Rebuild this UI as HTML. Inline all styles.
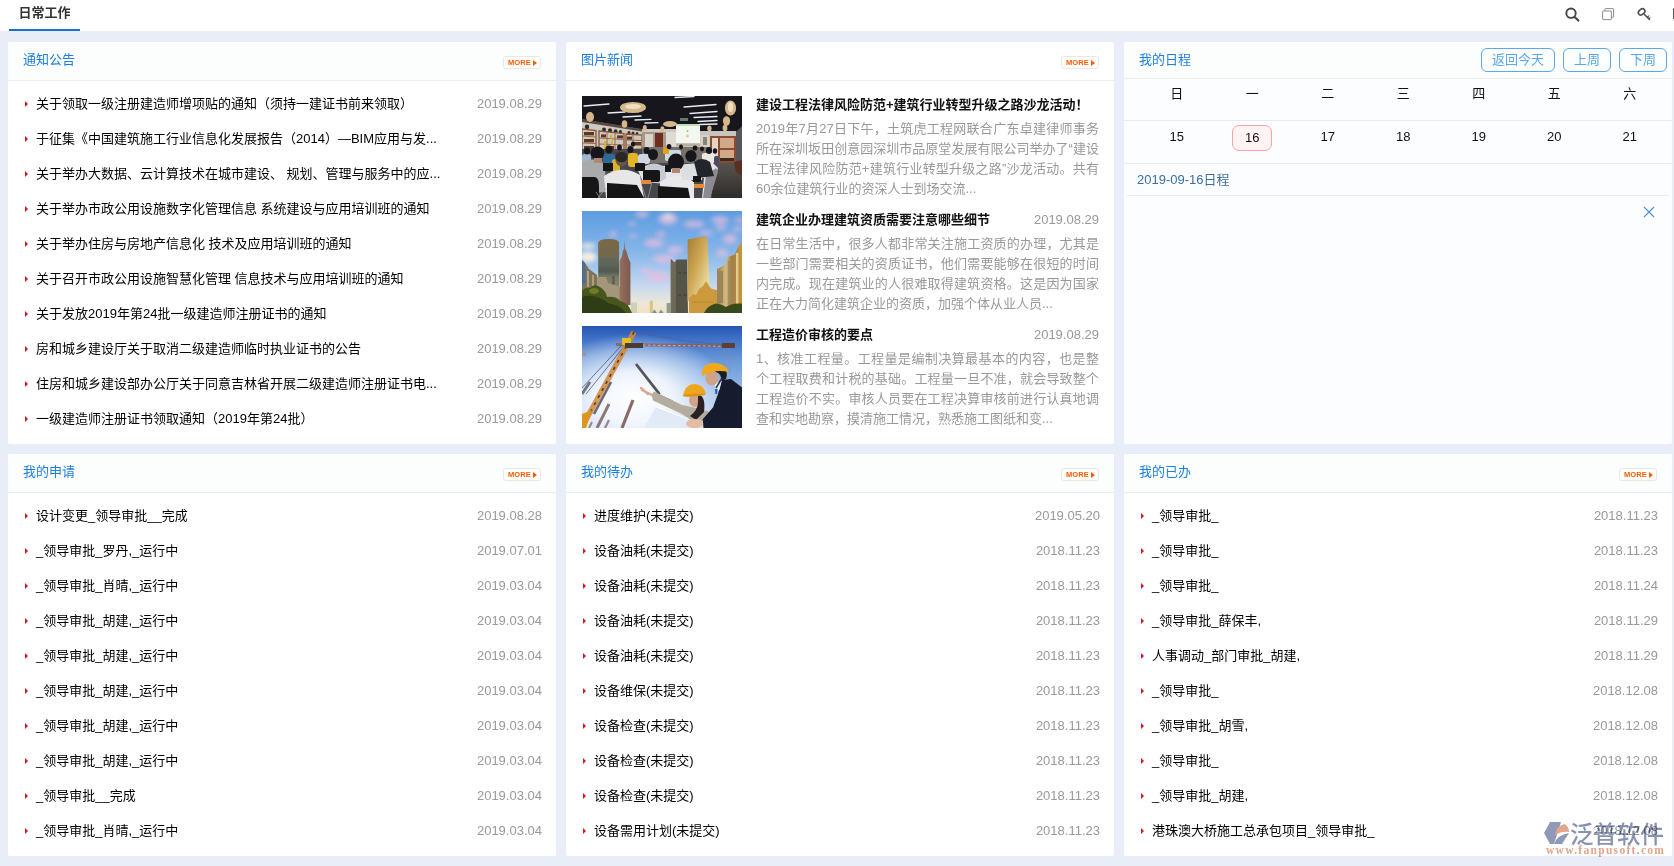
<!DOCTYPE html>
<html lang="zh-CN">
<head>
<meta charset="utf-8">
<title>日常工作</title>
<style>
*{box-sizing:border-box;margin:0;padding:0}
html,body{width:1674px;height:866px;overflow:hidden}
body{position:relative;background:#e9edf8;font-family:"Liberation Sans","Noto Sans CJK SC",sans-serif;font-size:13px;color:#222;}
#top{position:absolute;left:0;top:0;width:1674px;height:31px;background:#fff}
#tab{position:absolute;left:9px;top:0;width:71px;height:31px;text-align:center;line-height:26px;font-weight:bold;color:#333;font-size:13px}
.ico{position:absolute;top:0}
.panel{position:absolute;width:548px;background:#fff;border-radius:2px;overflow:hidden}
.r1{top:42px;height:402px}
.r2{top:454px;height:402px}
.c1{left:8px}.c2{left:566px}.c3{left:1124px}
#p3{background:#fcfdfe}
.hd{position:relative;height:39px;border-bottom:1px solid #ebecee;background:#fcfdfd}
.hd .t{position:absolute;left:15px;top:0;line-height:36px;color:#1e7fe0;font-size:13px}
.more{position:absolute;right:15px;top:14px;width:38px;height:13px;border:1px solid #ece6e0;border-radius:3px;background:#fff;font-size:7.5px;line-height:11px;color:#ff5a00;font-weight:bold;text-align:left;padding-left:4px;letter-spacing:0.1px;font-family:"Liberation Sans",sans-serif}
.more i{position:absolute;right:3px;top:2.5px;border-left:4px solid #ff5a00;border-top:3.5px solid transparent;border-bottom:3.5px solid transparent;width:0;height:0}
ul{list-style:none;padding-top:5px}
li{position:relative;height:35px;line-height:35px;padding-left:28px;white-space:nowrap;color:#000}
li:before{content:"";position:absolute;left:16.5px;top:15px;border-left:3.5px solid #d9141c;border-top:3px solid transparent;border-bottom:3px solid transparent}
li b{position:absolute;right:14px;top:0;font-weight:normal;color:#999}

.news{position:absolute;left:16px;width:517px;height:102px}
.news .im{position:absolute;left:0;top:0;width:160px;height:102px;overflow:hidden}
.news .im svg{display:block}
.news h4{position:absolute;left:174px;top:0;font-size:13px;line-height:18px;font-weight:bold;color:#111;white-space:nowrap}
.news .d{position:absolute;right:0;top:0;line-height:18px;color:#999}
.news p{position:absolute;left:174px;top:23px;width:343px;line-height:20px;color:#999;white-space:nowrap}
.news p span{display:block;text-align:justify;text-align-last:justify}
.news p span.l{text-align-last:left}
.btn{position:absolute;top:6px;height:24px;border:1px solid #5aa7ea;border-radius:6px;color:#5aa7ea;text-align:center;line-height:21px;font-size:13px;background:#fdfeff}
.wk{position:absolute;left:15px;width:529px;display:flex}
.wk span{width:75.5px;text-align:center;color:#111}
.ln{position:absolute;height:1px;background:#e8ebee}
#today{display:inline-block;position:relative;left:0;font-style:normal;width:40px;height:26px;line-height:24px;border:1px solid #f7a3a3;border-radius:7px;background:#fff3f3;margin-top:4px;vertical-align:top}
#wm{position:absolute;left:1544px;top:822px;width:122px;height:34px;mix-blend-mode:multiply}
#wm .cn{position:absolute;left:26px;top:-6px;font-size:23.5px;line-height:34px;color:#8793b0;white-space:nowrap;font-family:"Noto Sans CJK SC",sans-serif;font-weight:500;letter-spacing:0}
#wm .url{position:absolute;left:2px;top:21px;font-family:"Liberation Serif",serif;font-weight:bold;font-size:11.5px;line-height:14px;color:#e3a58b;letter-spacing:1.3px;white-space:nowrap}
#tab:after{content:"";position:absolute;left:0;right:0;top:29.4px;height:1.7px;background:#1a73c9}
</style>
</head>
<body>
<div id="top"><div id="tab">日常工作</div><svg class="ico" style="left:1560px" width="114" height="31" viewBox="1560 0 114 31">
<circle cx="1571" cy="13.2" r="4.7" fill="none" stroke="#444" stroke-width="1.9"/><path d="M1574.6 16.9L1578.4 20.6" stroke="#444" stroke-width="2.1" stroke-linecap="round"/>
<rect x="1605" y="8.6" width="8.6" height="8.6" rx="0.6" fill="#fff" stroke="#8c8c8c" stroke-width="1"/><rect x="1602.6" y="11" width="8.8" height="8.6" rx="0.6" fill="#fff" stroke="#8c8c8c" stroke-width="1"/>
<ellipse cx="1641.6" cy="11.9" rx="3.6" ry="2.6" transform="rotate(-38 1641.6 11.9)" fill="none" stroke="#505050" stroke-width="1.6"/><path d="M1644.2 14.2L1649.4 19.4" stroke="#505050" stroke-width="1.5" stroke-linecap="round"/><path d="M1647.2 17.2L1649.2 15.6M1648.8 18.8L1650.4 17.4" stroke="#505050" stroke-width="1.1"/>
<rect x="1673" y="8.5" width="1" height="10.5" fill="#555"/>
</svg></div>

<div class="panel r1 c1" id="p1">
<div class="hd"><span class="t">通知公告</span><span class="more">MORE<i></i></span></div>
<ul>
<li>关于领取一级注册建造师增项贴的通知（须持一建证书前来领取）<b>2019.08.29</b></li>
<li>于征集《中国建筑施工行业信息化发展报告（2014）—BIM应用与发...<b>2019.08.29</b></li>
<li>关于举办大数据、云计算技术在城市建设、 规划、管理与服务中的应...<b>2019.08.29</b></li>
<li>关于举办市政公用设施数字化管理信息 系统建设与应用培训班的通知<b>2019.08.29</b></li>
<li>关于举办住房与房地产信息化 技术及应用培训班的通知<b>2019.08.29</b></li>
<li>关于召开市政公用设施智慧化管理 信息技术与应用培训班的通知<b>2019.08.29</b></li>
<li>关于发放2019年第24批一级建造师注册证书的通知<b>2019.08.29</b></li>
<li>房和城乡建设厅关于取消二级建造师临时执业证书的公告<b>2019.08.29</b></li>
<li>住房和城乡建设部办公厅关于同意吉林省开展二级建造师注册证书电...<b>2019.08.29</b></li>
<li>一级建造师注册证书领取通知（2019年第24批）<b>2019.08.29</b></li>
</ul>
</div>

<div class="panel r1 c2" id="p2">
<div class="hd" style="background:#fff"><span class="t">图片新闻</span><span class="more">MORE<i></i></span></div>

<div class="news" style="top:54px">
<div class="im" id="im1"><svg width="160" height="102" viewBox="0 0 160 102"><defs><filter id="b1" x="-5%" y="-5%" width="110%" height="110%"><feGaussianBlur stdDeviation="0.55"/></filter>
<linearGradient id="fl1" x1="0" y1="0" x2="0" y2="1"><stop offset="0" stop-color="#5a5450"/><stop offset="1" stop-color="#2e2b2a"/></linearGradient></defs>
<rect width="160" height="102" fill="#14171d"/>
<g filter="url(#b1)">
<polygon points="0,23 60,33 94,33 94,28 118,28 118,35 155,35 160,30 160,70 0,70" fill="#cfc8c0"/>
<polygon points="0,23 60,33 60,35.4 0,26" fill="#5a4a40"/><g fill="#2c2a2a"><ellipse cx="5" cy="31" rx="2.2" ry="2.4"/><ellipse cx="22" cy="33.6" rx="2" ry="2.2"/><ellipse cx="28" cy="34.4" rx="2" ry="2.2"/><ellipse cx="33.6" cy="35.2" rx="1.8" ry="2"/><ellipse cx="38.4" cy="35.8" rx="1.6" ry="1.8"/><ellipse cx="47" cy="36.8" rx="1.5" ry="1.7"/><ellipse cx="51" cy="37.2" rx="1.4" ry="1.6"/><ellipse cx="55" cy="37.6" rx="1.3" ry="1.5"/></g>
<g fill="none" stroke="#8a5636" stroke-width="1.3"><polygon points="0,33 14,34.5 14,54 0,56"/><polygon points="17,35 42,37.5 42,54 17,55"/><polygon points="44,38 60,39 60,53 44,54"/></g>
<g stroke="#9a6a48" stroke-width="1"><path d="M0 40L14 41M0 47L14 47.5M17 42L42 43.5M17 48L42 49M44 44L60 44.5M44 49L60 49.5M25 36L25 55M33 36.5L33 55M51 38.5L51 54"/></g>
<g fill="#5a3826"><rect x="2" y="36" width="10" height="3.4"/><rect x="2" y="43" width="10" height="3.4"/><rect x="2" y="50" width="10" height="3.6"/><rect x="19" y="38.4" width="5" height="3"/><rect x="35" y="39.4" width="6" height="3"/><rect x="26" y="50" width="6" height="3.4"/><rect x="45" y="40.6" width="5" height="3"/><rect x="52" y="46" width="7" height="3"/></g>
<g fill="#d8b42a"><rect x="22" y="45" width="2" height="8"/><rect x="29" y="44.6" width="2" height="4"/><rect x="28" y="38.6" width="2" height="4"/></g>
<rect x="60" y="36" width="34" height="18" fill="#a89888"/><rect x="63" y="38" width="8" height="14" fill="#d8d4cc"/><rect x="73" y="37" width="8" height="17" fill="#6e2f22"/>
<rect x="84" y="36" width="10" height="18" fill="#dedbd4"/>
<rect x="94" y="29" width="24" height="18.4" fill="#f2f7ef"/><rect x="94" y="28" width="24" height="2" fill="#bfe0b0"/><circle cx="105.5" cy="40" r="1.4" fill="#e8c49a"/><circle cx="105.5" cy="35" r="0.9" fill="#8ac078"/>
<rect x="94" y="47.4" width="24" height="3" fill="#b8aea2"/>
<rect x="118" y="35" width="38" height="6" fill="#c8c4c0"/>
<rect x="119" y="39" width="8" height="12" fill="#d8d2c4"/><rect x="121" y="41" width="4" height="8" fill="#8a8478"/>
<rect x="128" y="40" width="26" height="27" fill="#8a4e32"/><rect x="130" y="42" width="6" height="22" fill="#e4d4c0"/><rect x="138" y="42" width="14" height="22" fill="#d0aa88"/><rect x="138" y="52" width="14" height="2" fill="#8a4e32"/><rect x="138" y="62" width="14" height="3" fill="#3a2a24"/>
<rect x="154" y="28" width="6" height="46" fill="#57575a"/>
<polygon points="0,0 160,0 160,30 155,35 118,35 118,28 94,28 94,33 60,33 0,23" fill="#14171d"/>
<g stroke="#e8ecf2" stroke-width="1.3" stroke-linecap="round"><path d="M2 10L27 8"/><path d="M26 17L43 16"/><path d="M41 21L59 20"/><path d="M53 24L69 23.4"/><path d="M63 27L76 26.6"/><path d="M93 1.5L112 0.5"/><path d="M102 11L134 8.5"/><path d="M108 17.5L135 15.5"/><path d="M112 21.5L135 20.5"/><path d="M116 25.5L135 24.5"/><path d="M118 28.5L135 28"/></g>
<g fill="#d6b78c"><ellipse cx="51" cy="11.5" rx="13" ry="5.6"/><ellipse cx="8" cy="21" rx="4" ry="5"/><ellipse cx="42.5" cy="28" rx="2.8" ry="3.8"/><ellipse cx="88" cy="28" rx="7" ry="3"/><ellipse cx="148.5" cy="12" rx="5.6" ry="7.4"/><ellipse cx="144.5" cy="25" rx="3.6" ry="4.8"/><ellipse cx="143" cy="32" rx="2.4" ry="3.2"/><ellipse cx="62.8" cy="32" rx="2" ry="3"/><ellipse cx="80.4" cy="33" rx="2" ry="2.8"/><ellipse cx="127.4" cy="32.6" rx="2.2" ry="3"/></g>
<g fill="#efe0c4"><ellipse cx="51" cy="10.5" rx="8" ry="2.6"/><ellipse cx="148.5" cy="11" rx="2.6" ry="5"/></g>
<rect x="98" y="22" width="8" height="3" fill="#6a7a6a"/>
<polygon points="128,67 160,66 160,102 122,102" fill="url(#fl1)"/>
<polygon points="152,66 160,64 160,80 154,76" fill="#5a2e20"/>
<rect x="0" y="53" width="130" height="49" fill="#45464c"/>
<rect x="60" y="51" width="70" height="16" fill="#77716a"/>
<rect x="83" y="54" width="16" height="11" rx="2" fill="#cfd9e6"/>
<rect x="120" y="57" width="13" height="10" rx="2" fill="#ece8e2"/><rect x="132" y="60" width="5" height="9" rx="2" fill="#4a4a6a"/>
<polygon points="55,72 130,66 136,72 128,102 120,102 122,82 60,84" fill="#e4e4ea"/>
<polygon points="124,80 134,72 136,76 128,102 121,102" fill="#8a8a90"/>
<rect x="21" y="58" width="12" height="10" rx="2" fill="#2f6a98"/>
<rect x="46" y="57" width="10" height="14" rx="3" fill="#e3b42c"/><rect x="30" y="63" width="8" height="14" rx="3" fill="#d9b12e"/>
<rect x="81" y="51" width="6" height="7" rx="1" fill="#e0a020"/>
<rect x="0" y="58" width="9" height="12" rx="2" fill="#9fb7d2"/>
<rect x="56" y="58" width="12" height="10" rx="3" fill="#cfd6e2"/>
<rect x="33" y="56" width="6" height="8" rx="2" fill="#5a3048"/>
<path d="M0 66Q12 60 23 68L24 96L0 98Z" fill="#a9aaac"/>
<path d="M22 80Q40 68 58 79L62 102L24 102Z" fill="#e9e6ea"/>
<path d="M60 72Q72 63 84 72L84 88L62 86Z" fill="#c6cbd3"/>
<path d="M78 86Q95 74 112 86L112 102L78 102Z" fill="#ebe8ea"/>
<path d="M99 72Q110 64 121 72L120 84L100 84Z" fill="#dcdfe2"/>
<path d="M112 66Q120 60 128 66L132 80L116 82Z" fill="#24262c"/>
<g fill="#17171a"><ellipse cx="15.5" cy="57" rx="6.8" ry="6.6"/><ellipse cx="71" cy="58.5" rx="5" ry="5.5"/><ellipse cx="94" cy="66" rx="8" ry="8.5"/><ellipse cx="109" cy="60" rx="5.6" ry="6"/><ellipse cx="27" cy="53.5" rx="3.6" ry="4"/><ellipse cx="48.4" cy="53.5" rx="3" ry="3.4"/><ellipse cx="64.6" cy="54.5" rx="3" ry="3.6"/><ellipse cx="127" cy="54.5" rx="3" ry="3.4"/><ellipse cx="37.5" cy="51.5" rx="2.4" ry="3"/><ellipse cx="51" cy="48" rx="2.2" ry="2.6"/><ellipse cx="87" cy="50.5" rx="2.4" ry="2.6"/><ellipse cx="5" cy="55" rx="3" ry="3.4"/><ellipse cx="99" cy="51" rx="2" ry="2.4"/><ellipse cx="113" cy="52" rx="2.4" ry="2.6"/><ellipse cx="120" cy="53" rx="2" ry="2.4"/><ellipse cx="133" cy="55" rx="2.2" ry="2.8"/></g>
<rect x="12" y="62" width="8" height="5" fill="#b08870"/><rect x="90" y="72" width="8" height="5" fill="#b08870"/>
<ellipse cx="39.5" cy="63" rx="6.2" ry="7.5" fill="#6a5448"/><ellipse cx="39.5" cy="61" rx="6" ry="5.2" fill="#2a2624"/>
<g fill="#121317"><path d="M0 81L13 81Q17 82 17 90L17 102L0 102Z"/><path d="M25 87L55 89L62 102L25 102Z"/><rect x="61" y="74" width="17" height="12" rx="2"/><path d="M76 90L106 92L108 102L76 102Z"/><rect x="53" y="67" width="10" height="8" rx="1"/><rect x="21" y="67" width="10" height="8"/><rect x="111" y="80" width="8" height="6"/><rect x="83" y="69" width="6" height="7"/></g>
<g stroke="#9a9aa0" stroke-width="0.8" fill="none"><path d="M14 96L18 102M24 92L16 102M60 90L64 102M70 86L66 102"/></g>
<rect x="59" y="84" width="10" height="4" fill="#e58a3a"/><rect x="112" y="88" width="10" height="4" fill="#e58a3a"/>
</g></svg></div>
<h4>建设工程法律风险防范+建筑行业转型升级之路沙龙活动！</h4>
<p><span>2019年7月27日下午，土筑虎工程网联合广东卓建律师事务</span><span>所在深圳坂田创意园深圳市品原堂发展有限公司举办了“建设</span><span>工程法律风险防范+建筑行业转型升级之路”沙龙活动。共有</span><span class="l">60余位建筑行业的资深人士到场交流...</span></p>
</div>
<div class="news" style="top:169px">
<div class="im" id="im2"><svg width="160" height="102" viewBox="0 0 160 102"><defs><filter id="b2" x="-5%" y="-5%" width="110%" height="110%"><feGaussianBlur stdDeviation="0.6"/></filter><filter id="b2c" x="-40%" y="-40%" width="180%" height="180%"><feGaussianBlur stdDeviation="2.6"/></filter>
<linearGradient id="sk2" x1="0" y1="0" x2="0" y2="1"><stop offset="0" stop-color="#5c9ce0"/><stop offset="0.4" stop-color="#86b6ea"/><stop offset="0.72" stop-color="#c2d8f0"/><stop offset="0.9" stop-color="#ece6da"/><stop offset="1" stop-color="#f2e2c0"/></linearGradient>
<linearGradient id="gd" x1="0" y1="0" x2="1" y2="1"><stop offset="0" stop-color="#a47c34"/><stop offset="0.45" stop-color="#cfa956"/><stop offset="0.8" stop-color="#e8d8a0"/><stop offset="1" stop-color="#d4c080"/></linearGradient>
<linearGradient id="ba" x1="0" y1="0" x2="0" y2="1"><stop offset="0" stop-color="#7c6844"/><stop offset="0.35" stop-color="#6e6850"/><stop offset="0.5" stop-color="#4e5a52"/><stop offset="0.6" stop-color="#7c7a62"/><stop offset="1" stop-color="#948e74"/></linearGradient>
<linearGradient id="bb" x1="0" y1="0" x2="1" y2="0"><stop offset="0" stop-color="#98705c"/><stop offset="1" stop-color="#7a5a50"/></linearGradient>
<linearGradient id="bf" x1="0" y1="0" x2="1" y2="0"><stop offset="0" stop-color="#9a7e4a"/><stop offset="0.35" stop-color="#d2bc80"/><stop offset="0.6" stop-color="#a07e46"/><stop offset="1" stop-color="#c8963e"/></linearGradient></defs>
<rect width="160" height="102" fill="url(#sk2)"/>
<g filter="url(#b2c)" fill="#eabfe0" opacity="0.7"><ellipse cx="86" cy="8" rx="10" ry="6"/><ellipse cx="60" cy="3" rx="7" ry="3.4"/><ellipse cx="72" cy="32" rx="10" ry="4.4"/><ellipse cx="79" cy="23" rx="5" ry="2.6"/><ellipse cx="112" cy="13" rx="11" ry="3.6"/><ellipse cx="138" cy="9" rx="9" ry="4"/><ellipse cx="139" cy="16.5" rx="6" ry="2.4"/><ellipse cx="148" cy="28" rx="7" ry="5"/><ellipse cx="157" cy="9" rx="5" ry="2.4"/><ellipse cx="156" cy="18" rx="5" ry="2.4"/><ellipse cx="82" cy="48" rx="11" ry="4.6"/><ellipse cx="76" cy="66" rx="11" ry="6"/><ellipse cx="93" cy="39" rx="8" ry="4"/><ellipse cx="31" cy="23" rx="4" ry="2.6"/><ellipse cx="51" cy="25" rx="3.4" ry="2.2"/><ellipse cx="50" cy="13" rx="4" ry="2"/><ellipse cx="140" cy="42" rx="6" ry="4"/><ellipse cx="64" cy="60" rx="6" ry="3"/><ellipse cx="124" cy="22" rx="7" ry="2.6"/></g>
<g filter="url(#b2c)" fill="#f6f0e2"><ellipse cx="6" cy="35" rx="8" ry="2.6"/><ellipse cx="6" cy="46" rx="9" ry="5.4"/><ellipse cx="86" cy="6" rx="5" ry="3" opacity="0.6"/></g>
<g filter="url(#b2)">
<path d="M16.2 32Q16.6 28.2 26.6 28Q36.8 28.2 37.1 32L37.1 92L16.2 92Z" fill="url(#ba)"/><rect x="17" y="47" width="19" height="8" fill="#5a665e" opacity="0.8"/><rect x="30" y="65" width="2.6" height="9" fill="#5a5e58"/>
<polygon points="0,49 3,52 7,58 15,64 15,84 0,84" fill="#7a7460"/><polygon points="0,49 3,52 4,72 0,74" fill="#4e6e90"/><rect x="5" y="60" width="2" height="16" fill="#c0a070"/><rect x="10" y="64" width="2" height="14" fill="#b89c70"/>
<polygon points="15,66 24,66 26,72 36,75 40,78 40,96 15,96" fill="#a4967a"/>
<polygon points="42.4,29 43,37.6 45,41.6 46,46 48.4,51.6 48.4,94 37.6,94 37.6,50 40,45 40.6,41 42,37.6" fill="url(#bb)"/>
<rect x="49" y="91.4" width="6" height="10.6" fill="#ccd2ba"/><rect x="67.8" y="89.6" width="3" height="12.4" fill="#d8c484"/><rect x="84.6" y="92" width="4" height="10" fill="#8f9e92"/><polygon points="70,102 72.4,98.6 75,102" fill="#7f938e"/><polygon points="76.6,102 79,98.6 81.6,102" fill="#7f938e"/>
<polygon points="88.8,47.8 92.6,52 94.6,48.6 105,48.6 106,102 88.8,102" fill="#575348"/><rect x="88.8" y="51" width="5" height="51" fill="#6e6a56"/><rect x="96" y="61" width="9" height="1.6" fill="#4a463c"/><rect x="96" y="83.4" width="9" height="1.6" fill="#4a463c"/><rect x="99" y="52" width="2" height="50" fill="#565246"/>
<polygon points="105.6,28.4 124,25 125.4,29 127.6,72 124,90 105.6,90" fill="url(#gd)"/>
<path d="M107 102L107 87L111 83L114 84L117 78L121 75L124 70L127 75L130 78L135 79L135 102Z" fill="#cc9a3c"/><rect x="110" y="90" width="22" height="2" fill="#c09238"/>
<polygon points="135,58 142,54.6 146,46 153,43.6 155,38 158.6,33 160,30 160,96 135,96" fill="url(#bf)"/><rect x="135" y="60" width="6" height="32" fill="#9a8458"/><rect x="146" y="50" width="5" height="44" fill="#9c8458" opacity="0.7"/><rect x="154" y="42" width="2.4" height="52" fill="#e6cc8c"/>
<path d="M0 80Q3 76 8 77Q12 72 18 76Q24 80 25 86Q34 85 38 90Q46 91 50 102L0 102Z" fill="#46561a"/><path d="M0 86Q12 82 26 92Q38 94 44 102L0 102Z" fill="#2e3c14"/><ellipse cx="12" cy="80" rx="5" ry="3" fill="#6e7c26"/>
<path d="M122 102Q126 94 134 92.4Q140 93 144 96Q150 91.6 160 92.6L160 102Z" fill="#38481a"/>
</g></svg></div>
<h4>建筑企业办理建筑资质需要注意哪些细节</h4><span class="d">2019.08.29</span>
<p><span>在日常生活中，很多人都非常关注施工资质的办理，尤其是</span><span>一些部门需要相关的资质证书，他们需要能够在很短的时间</span><span>内完成。现在建筑业的人很难取得建筑资格。这是因为国家</span><span class="l">正在大力简化建筑企业的资质，加强个体从业人员...</span></p>
</div>
<div class="news" style="top:284px">
<div class="im" id="im3"><svg width="160" height="102" viewBox="0 0 160 102"><defs><filter id="b3" x="-5%" y="-5%" width="110%" height="110%"><feGaussianBlur stdDeviation="0.7"/></filter>
<linearGradient id="sk3" x1="0" y1="0" x2="0" y2="1"><stop offset="0" stop-color="#2555b2"/><stop offset="0.12" stop-color="#3e70c6"/><stop offset="0.35" stop-color="#6a9ada"/><stop offset="0.7" stop-color="#a4c2ea"/><stop offset="1" stop-color="#cddcf2"/></linearGradient>
<radialGradient id="gl3" cx="0.32" cy="0.70" r="0.62"><stop offset="0" stop-color="#ffffff" stop-opacity="1"/><stop offset="0.4" stop-color="#f6f9fe" stop-opacity="0.92"/><stop offset="0.75" stop-color="#e4edfa" stop-opacity="0.45"/><stop offset="1" stop-color="#dfeafa" stop-opacity="0"/></radialGradient></defs>
<rect width="160" height="102" fill="url(#sk3)"/><rect width="160" height="102" fill="url(#gl3)"/>
<g filter="url(#b3)">
<path d="M52 6L0 62M52 8L4 68" stroke="#3a4566" stroke-width="0.7" fill="none"/>
<path d="M56 7L110 16L150 19" stroke="#5a5a80" stroke-width="0.6" fill="none"/>
<path d="M34 18.5L153 20" stroke="#8f5c4a" stroke-width="3" stroke-opacity="0.75"/><path d="M56 19L150 20.4" stroke="#c8d4ec" stroke-width="0.9" stroke-dasharray="2.5 2.5" stroke-opacity="0.8"/><rect x="140" y="17" width="13" height="5" fill="#5a4038"/>
<path d="M142 22L143 50M147 22L148 46" stroke="#8a8aa0" stroke-width="0.6"/>
<path d="M52 6L0 101" stroke="#d08a3e" stroke-width="5.5" stroke-opacity="0.88"/><path d="M52 6L3 96" stroke="#5a3a2a" stroke-width="1.6" stroke-dasharray="3 5"/>
<polygon points="0,88 10,84 4,102 0,102" fill="#dc961e"/>
<rect x="40" y="12" width="9" height="7" fill="#e4c020"/><rect x="43" y="17" width="18" height="5" fill="#4a3a36"/>
<path d="M29 56L12 88" stroke="#6a6a74" stroke-width="2.6"/>
<path d="M54 38L77.5 68.2" stroke="#56525c" stroke-width="2.8"/><path d="M76 68L91 75" stroke="#7a5a4a" stroke-width="0.7"/>
<path d="M0 68L8 56" stroke="#707684" stroke-width="3"/><rect x="0" y="24" width="4" height="6" fill="#8f98a8"/>
<path d="M27 78L15 102" stroke="#8e7874" stroke-width="3"/><path d="M51 74L40 102" stroke="#8a6a68" stroke-width="3.2"/><path d="M27 94L23 102" stroke="#9a8888" stroke-width="2.4"/><path d="M10 96L7 102" stroke="#9a8888" stroke-width="2"/>
<polygon points="62.5,102 73.7,80.7 106.5,93.2 108,102" fill="#e2eaf7"/><path d="M73.7 80.7L106.5 93.2" stroke="#fff" stroke-width="1"/>
<path d="M70 69L60 64M66 68L59 62" stroke="#d8a890" stroke-width="2.4" stroke-linecap="round"/>
<polygon points="69.6,69 72,65.4 100,79 114,82 128,86 129,94 112,96 100,88 71,74.6" fill="#b4ac9c"/>
<ellipse cx="113" cy="74" rx="6" ry="7" fill="#d2a48a"/><path d="M116 68Q124 70 122 86L114 94L108 90Q116 84 116 76Z" fill="#2a2220"/>
<path d="M101 70Q103 58 113 58Q122 59 124 68Q112 66 101 70Z" fill="#f0a61c"/><ellipse cx="112" cy="69" rx="11.5" ry="1.6" fill="#dc9412" transform="rotate(-4 112 69)"/>
<polygon points="121.5,102 120.7,93.2 131,81.5 136,68 139.8,54.1 149,52.9 160,61.6 160,102" fill="#141b2e"/>
<polygon points="132.6,58 140,54 137.4,64 134,66" fill="#e8eef8"/><polygon points="133,63 135.6,63 135,68 133.4,68" fill="#2a5ab0"/>
<ellipse cx="129.8" cy="52" rx="6.4" ry="7.4" fill="#d2a286"/><path d="M130 43L143 42Q146 48 144 53L139 55Q140 48 134 46Z" fill="#1c1a1c"/><path d="M140 52L134 62" stroke="#2a3a56" stroke-width="1.6"/>
<path d="M120 48Q120 37 133 37Q144 38 147 46Q132 43 120 50Z" fill="#f2a81c"/>
<ellipse cx="112.6" cy="97.6" rx="8.6" ry="4.6" fill="#e4bca4"/>
</g></svg></div>
<h4>工程造价审核的要点</h4><span class="d">2019.08.29</span>
<p><span>1、核准工程量。工程量是编制决算最基本的内容，也是整</span><span>个工程取费和计税的基础。工程量一旦不准，就会导致整个</span><span>工程造价不实。审核人员要在工程决算审核前进行认真地调</span><span class="l">查和实地勘察，摸清施工情况，熟悉施工图纸和变...</span></p>
</div>
</div>

<div class="panel r1 c3" id="p3">
<div class="hd" style="height:37px"><span class="t" style="line-height:35px">我的日程</span>
<span class="btn" style="left:357px;width:74px">返回今天</span><span class="btn" style="left:439px;width:48px">上周</span><span class="btn" style="left:495px;width:48px">下周</span></div>
<div class="wk" style="top:37px;line-height:29px"><span>日</span><span>一</span><span>二</span><span>三</span><span>四</span><span>五</span><span>六</span></div>
<div class="ln" style="left:0;width:548px;top:78px"></div>
<div class="wk" style="top:79px;line-height:31px"><span>15</span><span><em id="today">16</em></span><span>17</span><span>18</span><span>19</span><span>20</span><span>21</span></div>
<div class="ln" style="left:0;width:548px;top:121px"></div>
<div style="position:absolute;left:13px;top:122px;line-height:32px;color:#3a6ea5">2019-09-16日程</div>
<div class="ln" style="left:3px;width:542px;top:153px"></div>
<svg style="position:absolute;left:519px;top:164px" width="12" height="12" viewBox="0 0 12 12"><path d="M1 1L11 11M11 1L1 11" stroke="#4a90e2" stroke-width="1.1" fill="none"/></svg>
</div>

<div class="panel r2 c1" id="p4">
<div class="hd"><span class="t">我的申请</span><span class="more">MORE<i></i></span></div>
<ul>
<li>设计变更_领导审批__完成<b>2019.08.28</b></li>
<li>_领导审批_罗丹,_运行中<b>2019.07.01</b></li>
<li>_领导审批_肖晴,_运行中<b>2019.03.04</b></li>
<li>_领导审批_胡建,_运行中<b>2019.03.04</b></li>
<li>_领导审批_胡建,_运行中<b>2019.03.04</b></li>
<li>_领导审批_胡建,_运行中<b>2019.03.04</b></li>
<li>_领导审批_胡建,_运行中<b>2019.03.04</b></li>
<li>_领导审批_胡建,_运行中<b>2019.03.04</b></li>
<li>_领导审批__完成<b>2019.03.04</b></li>
<li>_领导审批_肖晴,_运行中<b>2019.03.04</b></li>
</ul>
</div>

<div class="panel r2 c2" id="p5">
<div class="hd"><span class="t">我的待办</span><span class="more">MORE<i></i></span></div>
<ul>
<li>进度维护(未提交)<b>2019.05.20</b></li>
<li>设备油耗(未提交)<b>2018.11.23</b></li>
<li>设备油耗(未提交)<b>2018.11.23</b></li>
<li>设备油耗(未提交)<b>2018.11.23</b></li>
<li>设备油耗(未提交)<b>2018.11.23</b></li>
<li>设备维保(未提交)<b>2018.11.23</b></li>
<li>设备检查(未提交)<b>2018.11.23</b></li>
<li>设备检查(未提交)<b>2018.11.23</b></li>
<li>设备检查(未提交)<b>2018.11.23</b></li>
<li>设备需用计划(未提交)<b>2018.11.23</b></li>
</ul>
</div>

<div class="panel r2 c3" id="p6">
<div class="hd"><span class="t">我的已办</span><span class="more">MORE<i></i></span></div>
<ul>
<li>_领导审批_<b>2018.11.23</b></li>
<li>_领导审批_<b>2018.11.23</b></li>
<li>_领导审批_<b>2018.11.24</b></li>
<li>_领导审批_薛保丰,<b>2018.11.29</b></li>
<li>人事调动_部门审批_胡建,<b>2018.11.29</b></li>
<li>_领导审批_<b>2018.12.08</b></li>
<li>_领导审批_胡雪,<b>2018.12.08</b></li>
<li>_领导审批_<b>2018.12.08</b></li>
<li>_领导审批_胡建,<b>2018.12.08</b></li>
<li>港珠澳大桥施工总承包项目_领导审批_<b>2018.12.08</b></li>
</ul>
</div>

<div id="wm">
<svg width="26" height="24" viewBox="0 0 26 24" style="position:absolute;left:0;top:0"><polygon points="0,11 6,0 17,0 10,22 6,22" fill="#8e9ab6"/><path d="M11 14Q12 3 21 2Q25 5 25 10Q16 9 11 14Z" fill="#e3a68c"/><path d="M10 22Q13 13 25 11L18 22Z" fill="#8e9ab6"/></svg>
<span class="cn">泛普软件</span><span class="url">www.fanpusoft.com</span></div>
</body>
</html>
